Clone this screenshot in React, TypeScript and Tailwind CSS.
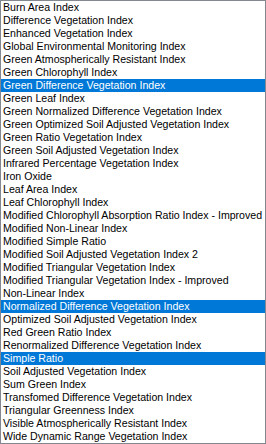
import React, { useState } from "react";

const indices = [
  "Burn Area Index",
  "Difference Vegetation Index",
  "Enhanced Vegetation Index",
  "Global Environmental Monitoring Index",
  "Green Atmospherically Resistant Index",
  "Green Chlorophyll Index",
  "Green Difference Vegetation Index",
  "Green Leaf Index",
  "Green Normalized Difference Vegetation Index",
  "Green Optimized Soil Adjusted Vegetation Index",
  "Green Ratio Vegetation Index",
  "Green Soil Adjusted Vegetation Index",
  "Infrared Percentage Vegetation Index",
  "Iron Oxide",
  "Leaf Area Index",
  "Leaf Chlorophyll Index",
  "Modified Chlorophyll Absorption Ratio Index - Improved",
  "Modified Non-Linear Index",
  "Modified Simple Ratio",
  "Modified Soil Adjusted Vegetation Index 2",
  "Modified Triangular Vegetation Index",
  "Modified Triangular Vegetation Index - Improved",
  "Non-Linear Index",
  "Normalized Difference Vegetation Index",
  "Optimized Soil Adjusted Vegetation Index",
  "Red Green Ratio Index",
  "Renormalized Difference Vegetation Index",
  "Simple Ratio",
  "Soil Adjusted Vegetation Index",
  "Sum Green Index",
  "Transfomed Difference Vegetation Index",
  "Triangular Greenness Index",
  "Visible Atmospherically Resistant Index",
  "Wide Dynamic Range Vegetation Index",
];

export default function App() {
  const [selected, setSelected] = useState<string[]>([
    "Green Difference Vegetation Index",
    "Normalized Difference Vegetation Index",
    "Simple Ratio",
  ]);

  const toggle = (name: string) =>
    setSelected((prev) =>
      prev.includes(name) ? prev.filter((n) => n !== name) : [...prev, name]
    );

  return (
    <div className="w-[266px] h-[444px] bg-white border border-[#828790] overflow-hidden font-['Liberation_Sans',Arial,sans-serif] text-[10.6px]">
      {indices.map((name) => {
        const on = selected.includes(name);
        return (
          <div
            key={name}
            onClick={() => toggle(name)}
            className={`h-[13px] leading-[13px] pl-[2px] whitespace-nowrap overflow-hidden cursor-default ${
              on ? "bg-[#0078d7] text-white" : "text-black"
            }`}
          >
            {name}
          </div>
        );
      })}
    </div>
  );
}
